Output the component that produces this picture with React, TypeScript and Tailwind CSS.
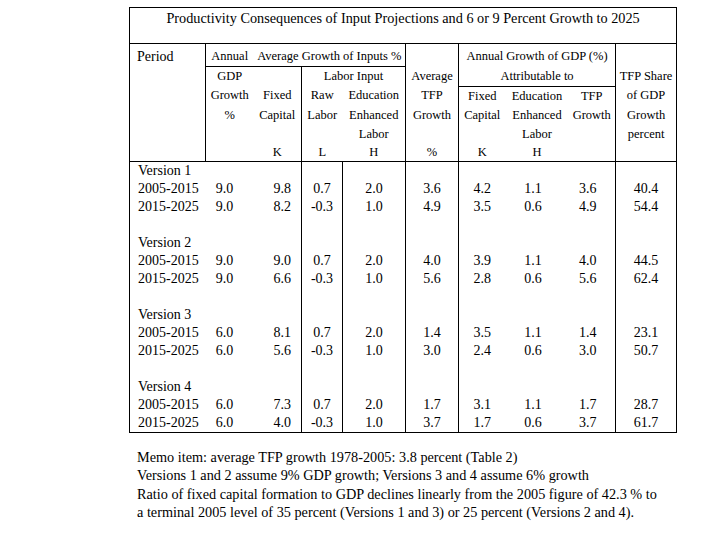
const serif = { fontFamily: '"Liberation Serif", "Times New Roman", serif' };

const rows: (string[] | null)[] = [
  ["Version 1"],
  ["2005-2015", "9.0", "9.8", "0.7", "2.0", "3.6", "4.2", "1.1", "3.6", "40.4"],
  ["2015-2025", "9.0", "8.2", "-0.3", "1.0", "4.9", "3.5", "0.6", "4.9", "54.4"],
  null,
  ["Version 2"],
  ["2005-2015", "9.0", "9.0", "0.7", "2.0", "4.0", "3.9", "1.1", "4.0", "44.5"],
  ["2015-2025", "9.0", "6.6", "-0.3", "1.0", "5.6", "2.8", "0.6", "5.6", "62.4"],
  null,
  ["Version 3"],
  ["2005-2015", "6.0", "8.1", "0.7", "2.0", "1.4", "3.5", "1.1", "1.4", "23.1"],
  ["2015-2025", "6.0", "5.6", "-0.3", "1.0", "3.0", "2.4", "0.6", "3.0", "50.7"],
  null,
  ["Version 4"],
  ["2005-2015", "6.0", "7.3", "0.7", "2.0", "1.7", "3.1", "1.1", "1.7", "28.7"],
  ["2015-2025", "6.0", "4.0", "-0.3", "1.0", "3.7", "1.7", "0.6", "3.7", "61.7"],
];

// per-column cell classes for the data rows (borders + nudges)
const dataCls = [
  "text-left pl-[8px]",
  "text-center pr-[10px]",
  "text-center pl-[10px]",
  "text-center border-l border-black",
  "text-center border-l border-r border-black",
  "text-center border-r border-black",
  "text-center",
  "text-center pr-[8px]",
  "text-center pr-[8px] border-r border-black",
  "text-center",
];

// header rows 3..6, columns GDP..Share (period column is rowspan)
const head: string[][] = [
  ["Growth", "Fixed", "Raw", "Education", "TFP", "Fixed", "Education", "TFP", "of GDP"],
  ["%", "Capital", "Labor", "Enhanced", "Growth", "Capital", "Enhanced", "Growth", "Growth"],
  ["", "", "", "Labor", "", "", "Labor", "", "percent"],
  ["", "K", "L", "H", "%", "K", "H", "", ""],
];

const headCls = [
  "",
  "",
  "border-l border-black",
  "border-r border-black",
  "border-r border-black",
  "",
  "",
  "border-r border-black",
  "",
];

const th = "font-normal text-center whitespace-nowrap text-[12.5px]";

export default function App() {
  return (
    <div className="w-[720px] h-[540px] bg-white text-black text-[14px]" style={serif}>
      <div className="pl-[129px] pt-[7px]">
        <table className="table-fixed w-[548px] border border-black border-collapse">
          <colgroup>
            <col className="w-[76px]" />
            <col className="w-[48px]" />
            <col className="w-[48px]" />
            <col className="w-[41px]" />
            <col className="w-[63px]" />
            <col className="w-[53px]" />
            <col className="w-[47px]" />
            <col className="w-[63px]" />
            <col className="w-[47px]" />
            <col className="w-[61px]" />
          </colgroup>
          <thead>
            <tr className="h-[36px]">
              <th
                colSpan={10}
                className="font-normal text-[14.25px] text-center align-top pt-[1px] border-b border-black leading-[18px] whitespace-nowrap"
              >
                Productivity Consequences of Input Projections and 6 or 9 Percent Growth to 2025
              </th>
            </tr>
            <tr className="h-[20px] leading-[19px]">
              <th rowSpan={6} className="font-normal text-left align-top pl-[7px] pt-[3px] border-r border-b border-black">
                Period
              </th>
              <th className={`${th} pt-[3px] border-b border-black`}>Annual</th>
              <th colSpan={3} className={`${th} pt-[3px] border-b border-r border-black`}>
                Average Growth of Inputs %
              </th>
              <th className="font-normal border-r border-black"></th>
              <th colSpan={3} className={`${th} pt-[3px] border-r border-black`}>
                Annual Growth of GDP (%)
              </th>
              <th className="font-normal"></th>
            </tr>
            <tr className="h-[19px] leading-[19px]">
              <th className={th}>GDP</th>
              <th className={th}></th>
              <th colSpan={2} className={`${th} border-l border-r border-black`}>
                Labor Input
              </th>
              <th className={`${th} border-r border-black`}>Average</th>
              <th colSpan={3} className={`${th} border-b border-r border-black`}>
                Attributable to
              </th>
              <th className={th}>TFP Share</th>
            </tr>
            {head.map((r, ri) => (
              <tr
                key={ri}
                className={ri === 3 ? "h-[17px] leading-[17px] border-b border-black" : "h-[19px] leading-[19px]"}
              >
                {r.map((c, ci) => (
                  <th key={ci} className={`${th} ${headCls[ci]}`}>
                    {c}
                  </th>
                ))}
              </tr>
            ))}
          </thead>
          <tbody>
            <tr className="h-[1px]">
              {dataCls.map((c, i) => (
                <td key={i} className={c}></td>
              ))}
            </tr>
            {rows.map((r, ri) => (
              <tr key={ri} className="h-[18px] leading-[18px]">
                {r && r.length === 1 ? (
                  <>
                    <td className={`${dataCls[0]} whitespace-nowrap`}>{r[0]}</td>
                    {dataCls.slice(1).map((c, i) => (
                      <td key={i} className={c}></td>
                    ))}
                  </>
                ) : (
                  dataCls.map((c, i) => (
                    <td key={i} className={`${c} whitespace-nowrap`}>
                      {r ? r[i] : ""}
                    </td>
                  ))
                )}
              </tr>
            ))}
          </tbody>
        </table>
        <div className="mt-[15px] pl-[8px] leading-[18.3px] whitespace-nowrap text-[14.25px]">
          <div>Memo item: average TFP growth 1978-2005: 3.8 percent (Table 2)</div>
          <div>Versions 1 and 2 assume 9% GDP growth; Versions 3 and 4 assume 6% growth</div>
          <div>Ratio of fixed capital formation to GDP declines linearly from the 2005 figure of 42.3 % to</div>
          <div>a terminal 2005 level of 35 percent (Versions 1 and 3) or 25 percent (Versions 2 and 4).</div>
        </div>
      </div>
    </div>
  );
}
